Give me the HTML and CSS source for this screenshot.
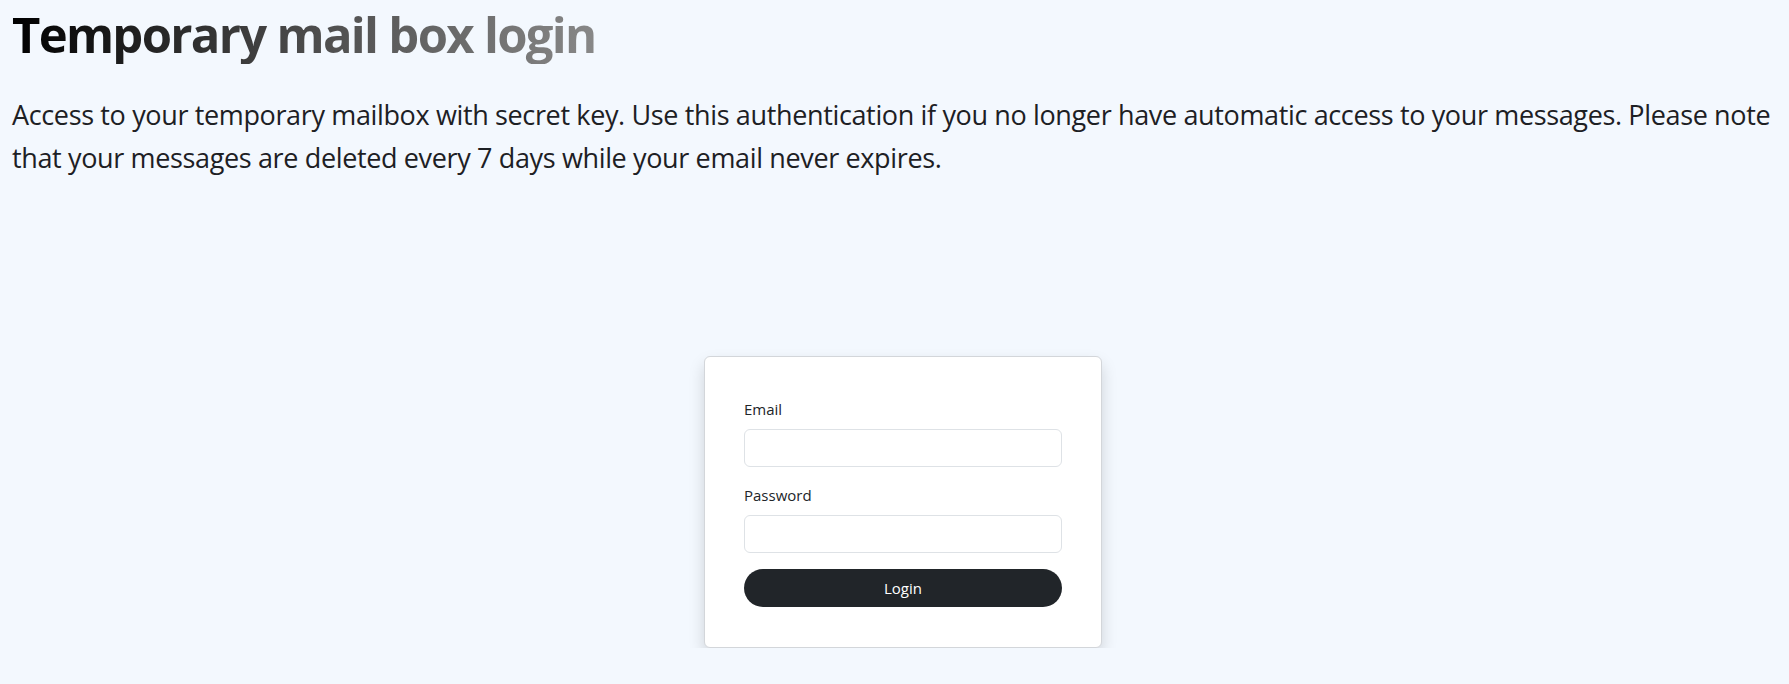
FILE: index.html
```html
<!DOCTYPE html>
<html lang="en">
<head>
<meta charset="utf-8">
<title>Temporary mail box login</title>
<link rel="stylesheet" href="styles.css">
</head>
<body>
<main class="page">
  <header class="intro">
    <h1 class="title">Temporary mail box login</h1>
    <p class="lead">Access to your temporary mailbox with secret key. Use this authentication if you no longer have automatic access to your messages. Please note that your messages are deleted every 7 days while your email never expires.</p>
  </header>
  <section class="login-area">
    <form class="card">
      <div class="field">
        <label class="label" for="email">Email</label>
        <input class="input" id="email" type="email">
      </div>
      <div class="field">
        <label class="label" for="password">Password</label>
        <input class="input" id="password" type="password">
      </div>
      <button class="btn" type="button">Login</button>
    </form>
  </section>
</main>
</body>
</html>
```

FILE: styles.css
```css
html, body {
  margin: 0;
  padding: 0;
}
body {
  background: #f3f8fe;
  color: #212529;
  font-family: "Open Sans", "Noto Sans", sans-serif;
  overflow: hidden;
}
.page {
  padding: 4px 0 0 12px;
}
.title {
  width: fit-content;
  margin: 0;
  font-size: 49px;
  line-height: 60px;
  font-weight: 700;
  letter-spacing: -1.7px;
  background: linear-gradient(90deg, #000 0%, #444 45%, #888 100%);
  -webkit-background-clip: text;
  background-clip: text;
  color: transparent;
}
.lead {
  margin: 29px 0 0;
  font-size: 27px;
  line-height: 43.2px;
  color: #1d2024;
  letter-spacing: -0.36px;
}
.login-area {
  display: flex;
  justify-content: center;
  padding-left: 5px;
  margin-top: 177px;
}
.card {
  box-sizing: border-box;
  width: 398px;
  background: #fff;
  border: 1px solid #d3d6da;
  border-radius: 6px;
  padding: 40px 39px;
  box-shadow: 0 8px 16px rgba(0, 0, 0, 0.15);
  display: flex;
  flex-direction: column;
}
.field {
  display: flex;
  flex-direction: column;
  margin-bottom: 16px;
}
.label {
  font-size: 15px;
  line-height: 24px;
  margin-bottom: 8px;
  color: #212529;
}
.input {
  box-sizing: border-box;
  height: 38px;
  border: 1px solid #dee2e6;
  border-radius: 6px;
  background: #fff;
  font: inherit;
  padding: 6px 12px;
}
.btn {
  height: 38px;
  border: none;
  border-radius: 19px;
  background: #212529;
  color: #fff;
  font-family: inherit;
  font-size: 15px;
  cursor: pointer;
}
```
